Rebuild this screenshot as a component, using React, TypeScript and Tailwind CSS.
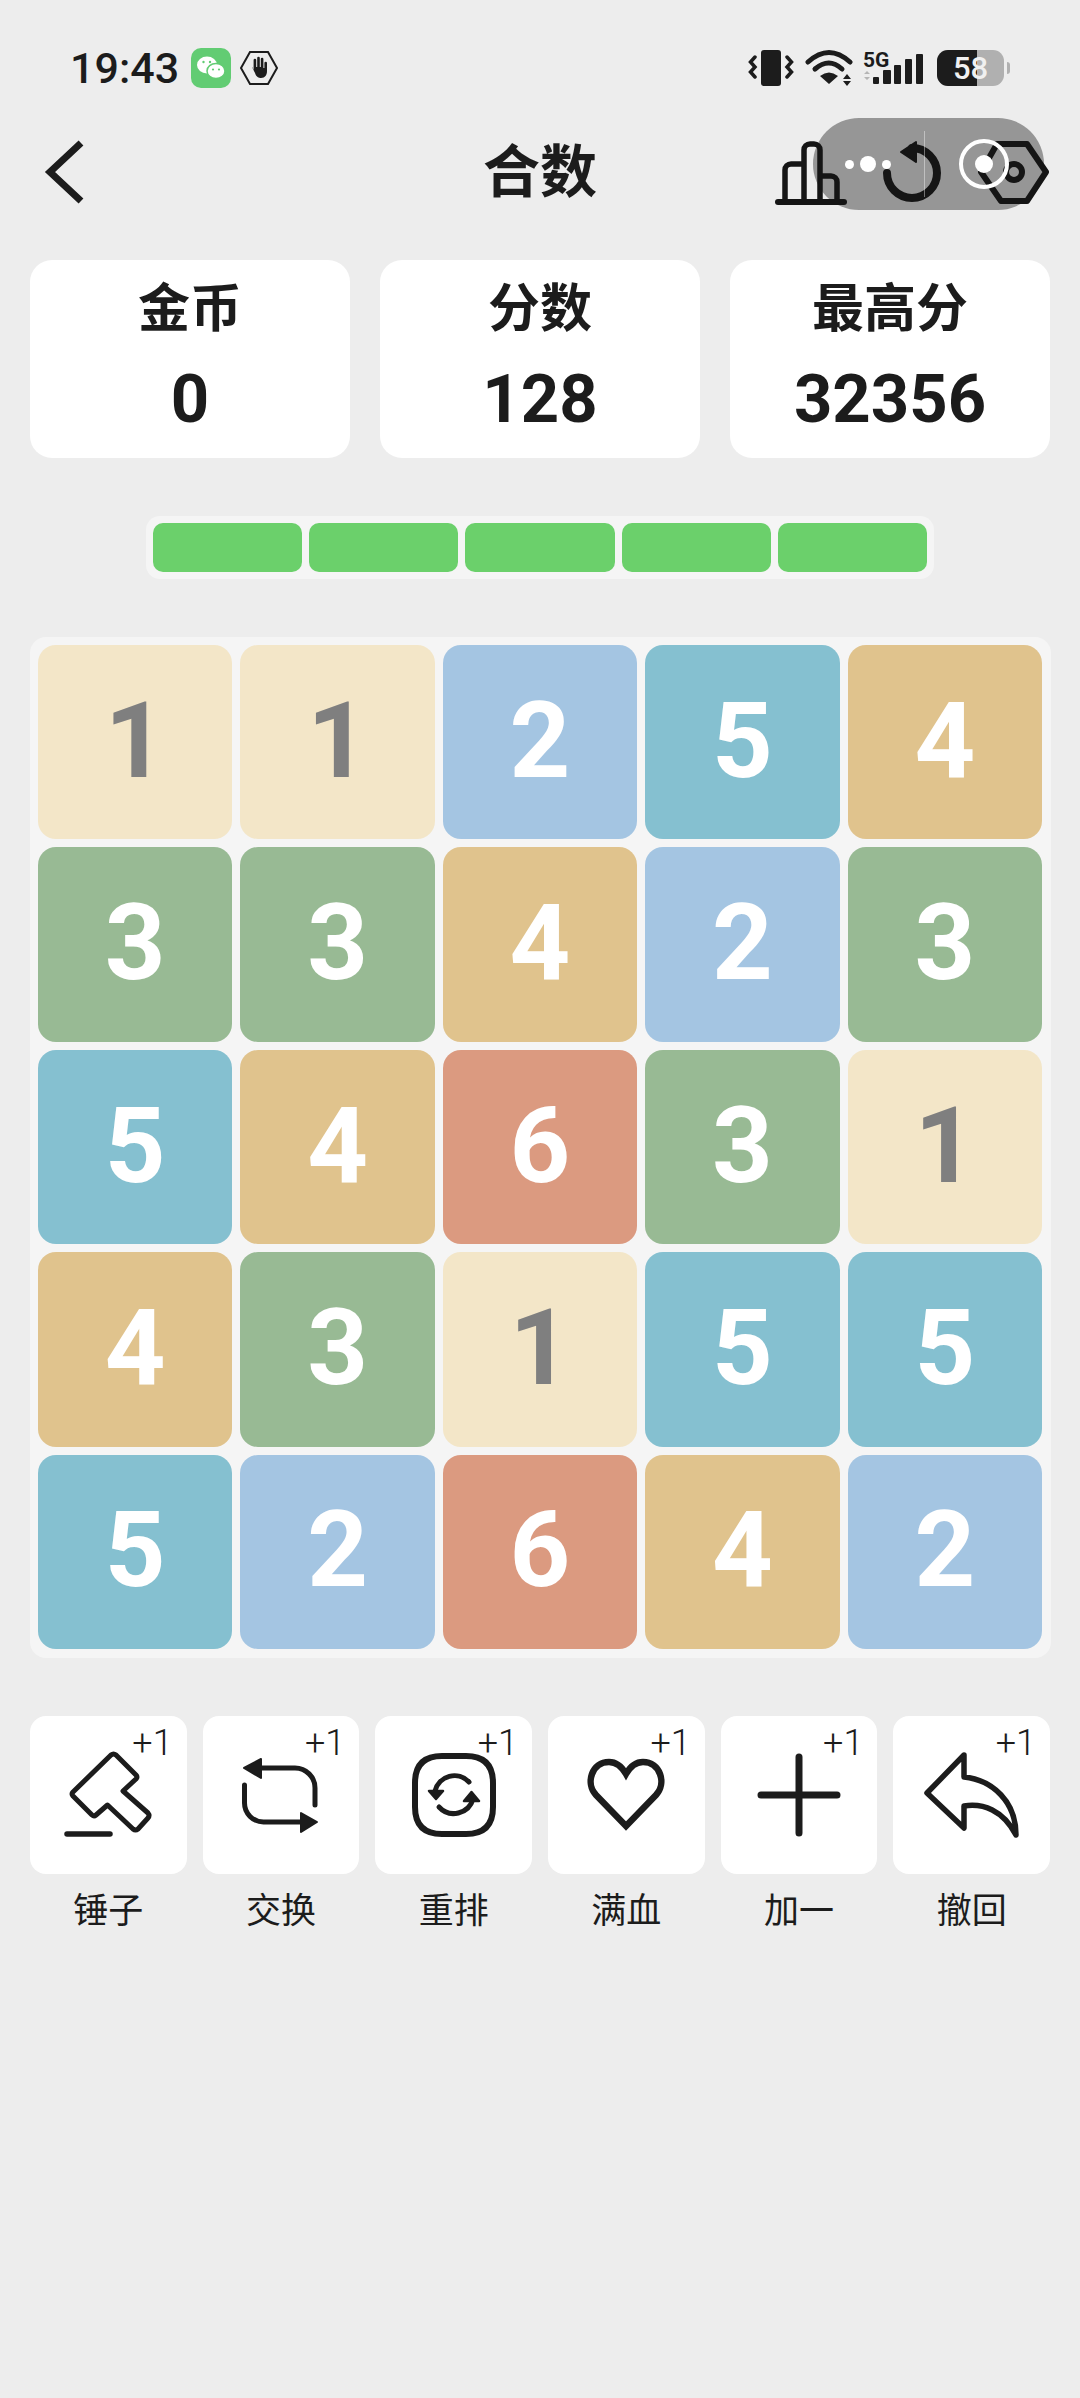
import React from "react";

const SANS = "font-['Roboto','Noto_Sans_CJK_SC',sans-serif]";

const tileStyles: Record<number, string> = {
  1: "bg-[#f3e6c8] text-[#7f7f7f]",
  2: "bg-[#a4c5e2] text-white",
  3: "bg-[#98ba94] text-white",
  4: "bg-[#e0c38d] text-white",
  5: "bg-[#85c0d0] text-white",
  6: "bg-[#db9a80] text-white",
};

const board = [
  [1, 1, 2, 5, 4],
  [3, 3, 4, 2, 3],
  [5, 4, 6, 3, 1],
  [4, 3, 1, 5, 5],
  [5, 2, 6, 4, 2],
];

const stats = [
  { label: "金币", value: "0" },
  { label: "分数", value: "128" },
  { label: "最高分", value: "32356" },
];

function StatusBar() {
  return (
    <div className="flex h-[72px] items-center justify-between pl-[70px] pr-[70px]">
      <div className="flex items-center gap-[12px]">
        <span className="text-[43px] leading-none font-medium text-[#1c1c1c]">19:43</span>
        <div className="flex items-center gap-[8px]">
          <div className="flex h-[40px] w-[40px] items-center justify-center rounded-[10px] bg-[#62cc73]">
            <svg width="30" height="26" viewBox="0 0 30 26">
              <ellipse cx="11" cy="10" rx="10" ry="8.5" fill="#fff" />
              <ellipse cx="20" cy="16" rx="9" ry="7.5" fill="#fff" stroke="#62cc73" strokeWidth="1.5" />
              <circle cx="7.5" cy="7" r="1.2" fill="#62cc73" />
              <circle cx="14" cy="7" r="1.2" fill="#62cc73" />
              <circle cx="17" cy="14.5" r="1.1" fill="#62cc73" />
              <circle cx="23" cy="14.5" r="1.1" fill="#62cc73" />
            </svg>
          </div>
          <svg width="40" height="36" viewBox="0 0 40 36">
            <path d="M11 2h18l9 16-9 16H11L2 18z" fill="none" stroke="#1c1c1c" strokeWidth="2" />
            <path d="M13 17l3 6c1 4 4 5 6 5 4 0 6-3 6-7v-8a1.3 1.3 0 0 0-2.600 0v5h-1V9a1.3 1.300 0 0 0-2.600 0v8h-1V8a1.300 1.300 0 0 0-2.600 0v9h-1v-7a1.300 1.300 0 0 0-2.600 0v10l-1-2.500z" fill="#1c1c1c" />
          </svg>
        </div>
      </div>
      <div className="flex items-center text-[#1c1c1c]">
        <svg width="46" height="38" viewBox="0 0 46 38">
          <rect x="13" y="1" width="20" height="36" rx="3" fill="#1c1c1c" />
          <path d="M7 8L2.500 13l4.500 5-4.500 5 4.500 5M39 8l4.500 5-4.500 5 4.500 5-4.500 5" fill="none" stroke="#1c1c1c" strokeWidth="3.500" strokeLinecap="round" />
        </svg>
        <svg width="48" height="38" viewBox="0 0 48 38" className="ml-[11px]">
          <path d="M3 13Q24-6 45 13" fill="none" stroke="#1c1c1c" strokeWidth="5" strokeLinecap="round" />
          <path d="M10 20Q24 8 37 20" fill="none" stroke="#1c1c1c" strokeWidth="5" strokeLinecap="round" />
          <path d="M15 27Q24 20 33 27L24 35z" fill="#1c1c1c" />
          <path d="M38 30l4-5 4 5zM38 32l4 5 4-5z" fill="#1c1c1c" />
        </svg>
        <div className="relative ml-[10px] h-[38px] w-[60px]">
          <span className="absolute left-0 top-[1px] text-[21px] leading-none font-bold text-[#1c1c1c]">5G</span>
          <svg width="60" height="38" viewBox="0 0 60 38">
            <path d="M1 25l3-3 3 3zM1 28l3 3 3-3z" fill="#b5b5b5" />
            <rect x="10" y="28" width="6" height="7" rx="1" fill="#1c1c1c" />
            <rect x="20" y="21" width="8" height="14" rx="1" fill="#1c1c1c" />
            <rect x="31" y="16" width="7" height="19" rx="1" fill="#1c1c1c" />
            <rect x="42" y="10" width="7" height="25" rx="1" fill="#1c1c1c" />
            <rect x="53" y="5" width="7" height="30" rx="1" fill="#1c1c1c" />
          </svg>
        </div>
        <div className="relative ml-[14px] flex h-[36px] w-[67px] overflow-hidden rounded-[11px] bg-[#b0b0b0]">
          <div className="h-full w-[40px] bg-[#1c1c1c]" />
          <span className="absolute inset-0 flex items-center justify-center text-[31px] leading-none font-medium text-[#f0f0f0]">58</span>
        </div>
        <div className="ml-[3px] h-[12px] w-[3px] rounded-r-full bg-[#b0b0b0]" />
      </div>
    </div>
  );
}

function TitleBar() {
  return (
    <div className="relative z-10 mt-[36px] flex h-[64px] items-center justify-between pl-[44px] pr-[31px]">
      <svg width="42" height="64" viewBox="0 0 42 64">
        <path d="M37 3L6 32l31 29" fill="none" stroke="#1c1c1c" strokeWidth="7" />
      </svg>
      <h1 className="absolute left-0 right-0 text-center text-[57px] leading-none font-bold text-[#1c1c1c]">合数</h1>
      <div className="flex items-center gap-[32px]">
        <svg width="72" height="66" viewBox="0 0 72 66" fill="none" stroke="#151515" strokeWidth="5.500">
          <path d="M10 62V31a6 6 0 0 1 6-6h13M29 62V11a6 6 0 0 1 6-6h4a6 6 0 0 1 6 6v51M45 37h11a6 6 0 0 1 6 6v19" />
          <path d="M3 63h66" strokeLinecap="round" strokeWidth="6" />
        </svg>
        <svg width="66" height="68" viewBox="0 0 66 68" fill="none">
          <path d="M8 35a25 25 0 1 0 25-25" stroke="#151515" strokeWidth="8" strokeLinecap="round" />
          <path d="M22 14L37 4v20z" fill="#151515" stroke="#151515" strokeWidth="2" strokeLinejoin="round" />
        </svg>
        <svg width="72" height="66" viewBox="0 0 72 66" fill="none" stroke="#151515" strokeWidth="6">
          <path d="M20 5h30l19 28-19 29H24L4 33z" strokeLinejoin="round" />
          <circle cx="37" cy="33" r="8" />
        </svg>
      </div>
    </div>
  );
}

function ToolIcon({ name }: { name: string }) {
  const stroke = { fill: "none", stroke: "#1c1c1c", strokeWidth: 5, strokeLinecap: "round" as const, strokeLinejoin: "round" as const };
  if (name === "hammer")
    return (
      <svg width="93" height="90" viewBox="0 0 93 90" {...stroke}>
        <path d="M49 5a4 4 0 0 1 5 0L74 25a3 3 0 0 1 0 4L61 41 86 63a4 4 0 0 1 0 5L76 79a4 4 0 0 1-5 0L45.500 55 34 65a3 3 0 0 1-4 0L11 46a3 3 0 0 1 0-4z" />
        <path d="M5 84h43" strokeWidth="5.500" />
      </svg>
    );
  if (name === "swap")
    return (
      <svg width="82" height="84" viewBox="0 0 82 84" {...stroke}>
        <path d="M22 15H55a20 20 0 0 1 20 20V52" />
        <path d="M4.500 32V50a19 19 0 0 0 19 19H60" />
        <path d="M4 15L21 6V25z" fill="#1c1c1c" strokeWidth="2" />
        <path d="M77 69L61 60V79z" fill="#1c1c1c" strokeWidth="2" />
      </svg>
    );
  if (name === "shuffle")
    return (
      <svg width="92" height="92" viewBox="0 0 92 92" {...stroke}>
        <path d="M46 7H58C76 7 85 16 85 34V58C85 76 76 85 58 85H34C16 85 7 76 7 58V34C7 16 16 7 34 7z" strokeWidth="6" />
        <path d="M27 42A20 20 0 0 1 61 33" />
        <path d="M65 50A20 20 0 0 1 31 58" />
        <path d="M21 42H35L28 50z" fill="#1c1c1c" strokeWidth="2.500" />
        <path d="M56 52H71L63.500 43z" fill="#1c1c1c" strokeWidth="2.500" />
      </svg>
    );
  if (name === "heart")
    return (
      <svg width="80" height="76" viewBox="0 0 80 76" fill="none" stroke="#1c1c1c" strokeWidth="6.500">
        <path d="M40 69L10 38C-1 26 6 5 23 5C31 5 36 10 40 17C44 10 49 5 57 5C74 5 81 26 70 38Z" />
      </svg>
    );
  if (name === "plus")
    return (
      <svg width="84" height="84" viewBox="0 0 84 84" {...stroke} strokeWidth="7">
        <path d="M42 4v76M4 42h76" />
      </svg>
    );
  return (
    <svg width="98" height="90" viewBox="0 0 98 90" {...stroke} strokeWidth="5.500">
      <path d="M41 5L4 43L41 78V56C60 53 80 60 93 85C93 52 70 30 41 27Z" />
    </svg>
  );
}

const tools = [
  { name: "hammer", label: "锤子" },
  { name: "swap", label: "交换" },
  { name: "shuffle", label: "重排" },
  { name: "heart", label: "满血" },
  { name: "plus", label: "加一" },
  { name: "undo", label: "撤回" },
];

export default function App() {
  return (
    <div className={`relative min-h-[2398px] w-[1080px] bg-[#ededed] pt-[32px] ${SANS}`}>
      {/* capsule background sits under the page icons, its controls over them */}
      <div className="absolute left-[813px] top-[118px] h-[92px] w-[231px] rounded-[46px] bg-[#969696]" />
      <StatusBar />
      <TitleBar />
      <div className="absolute left-[813px] top-[118px] z-20 flex h-[92px] w-[231px] items-center">
        <div className="ml-[32px] flex items-center gap-[6px]">
          <div className="h-[9px] w-[9px] rounded-full bg-white" />
          <div className="h-[16px] w-[16px] rounded-full bg-white" />
          <div className="h-[9px] w-[9px] rounded-full bg-white" />
        </div>
        <div className="ml-[33px] h-[66px] w-[1px] bg-white/40" />
        <div className="ml-[34px] flex h-[50px] w-[50px] items-center justify-center rounded-full border-[4px] border-white">
          <div className="h-[18px] w-[18px] rounded-full bg-white" />
        </div>
      </div>

      <div className="mt-[56px] flex gap-[30px] px-[30px]">
        {stats.map((s) => (
          <div key={s.label} className="flex h-[198px] w-[320px] flex-col items-center rounded-[22px] bg-white pt-[22px] text-[#1c1c1c]">
            <div className="text-[52px] leading-[56px] font-bold">{s.label}</div>
            <div className="mt-[28px] text-[67px] leading-[66px] font-bold">{s.value}</div>
          </div>
        ))}
      </div>

      <div className="mt-[58px] flex justify-center">
        <div className="flex h-[63px] w-[788px] gap-[7px] rounded-[14px] bg-[#f5f5f5] py-[7px] pl-[7px] pr-[7px]">
          {[0, 1, 2, 3, 4].map((i) => (
            <div key={i} className="flex-1 rounded-[10px] bg-[#6bd06b]" />
          ))}
        </div>
      </div>

      <div className="mx-[30px] mt-[58px] grid w-[1021px] grid-cols-5 gap-[8px] rounded-[16px] bg-[#f5f5f5] pb-[9px] pl-[8px] pr-[9px] pt-[8px]">
        {board.flat().map((n, i) => (
          <div key={i} className={`flex aspect-square items-center justify-center rounded-[18px] pb-[3px] text-[106px] leading-none font-bold ${tileStyles[n]}`}>
            {n}
          </div>
        ))}
      </div>

      <div className="mt-[58px] flex gap-[16px] px-[30px]">
        {tools.map((t) => (
          <div key={t.name} className="flex w-[157px] flex-col items-center">
            <div className="relative flex h-[158px] w-full items-center justify-center rounded-[16px] bg-white">
              <ToolIcon name={t.name} />
              <span className="absolute right-[14px] top-[7px] text-[36px] leading-[40px] font-light text-[#1c1c1c]">+1</span>
            </div>
            <span className="mt-[18px] text-[35px] leading-[40px] text-[#1c1c1c]">{t.label}</span>
          </div>
        ))}
      </div>
    </div>
  );
}
